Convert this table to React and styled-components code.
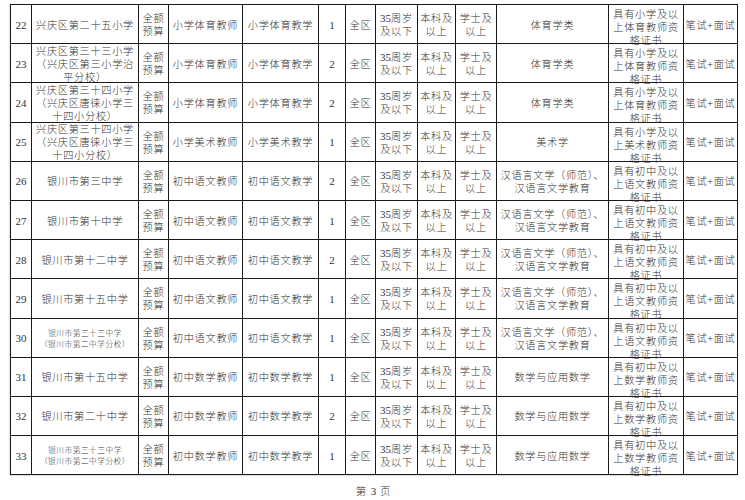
import React from 'react'
import styled, { createGlobalStyle } from 'styled-components'

const GlobalStyle = createGlobalStyle`
  body {
    margin: 0;
    background: #fff;
    font-family: "Liberation Serif", "Noto Sans CJK SC", serif;
    font-weight: 300;
    color: #333;
  }
`

const Page = styled.div`
  width: 745px;
  height: 500px;
  padding: 4px 0 0 10px;
  box-sizing: border-box;
`

const Table = styled.table`
  table-layout: fixed;
  width: 727px;
  border-collapse: collapse;
  border: 1.5px solid #151515;
  box-shadow: 0 1px 1px rgba(0, 0, 0, 0.12), -1px 0 1px rgba(0, 0, 0, 0.08);
`

const Row = styled.tr`
  height: 39.2px;
`

const Cell = styled.td`
  border: 1px solid #1a1a1a;
  padding: 0;
  vertical-align: middle;
  text-align: center;
`

const Inner = styled.div`
  height: 38px;
  display: flex;
  flex-direction: column;
  justify-content: ${p => (p.$top ? 'flex-start' : 'center')};
  padding-top: ${p => (p.$top ? '3px' : '2px')};
  box-sizing: border-box;
  overflow: visible;
  font-size: ${p => (p.$small ? '7.6px' : '10.2px')};
  letter-spacing: ${p => (p.$small ? '0.6px' : '0.7px')};
  line-height: ${p => (p.$small ? '11px' : '13px')};
  white-space: nowrap;
`

const Num = styled.span`
  font-family: "Liberation Serif", serif;
  font-weight: 400;
  font-size: 11px;
  letter-spacing: 0;
`

const Footer = styled.div`
  width: 727px;
  margin-top: 8px;
  text-align: center;
  font-size: 10.5px;
  letter-spacing: 1px;
`

const widths = [21, 107, 30, 74, 76, 27, 30, 42, 38, 41, 112, 75, 54]

const ti = {
  school: '兴庆区第三十四小学',
}

const rows = [
  { n: 22, school: ['兴庆区第二十五小学'], post: '小学体育教师', job: '小学体育教学', count: 1, major: ['体育学类'], cert: ['具有小学及以', '上体育教师资', '格证书'] },
  { n: 23, school: ['兴庆区第三十三小学', '（兴庆区第三小学治', '平分校）'], post: '小学体育教师', job: '小学体育教学', count: 2, major: ['体育学类'], cert: ['具有小学及以', '上体育教师资', '格证书'] },
  { n: 24, school: [ti.school, '（兴庆区唐徕小学三', '十四小分校）'], post: '小学体育教师', job: '小学体育教学', count: 2, major: ['体育学类'], cert: ['具有小学及以', '上体育教师资', '格证书'] },
  { n: 25, school: [ti.school, '（兴庆区唐徕小学三', '十四小分校）'], post: '小学美术教师', job: '小学美术教学', count: 1, major: ['美术学'], cert: ['具有小学及以', '上美术教师资', '格证书'] },
  { n: 26, school: ['银川市第三中学'], post: '初中语文教师', job: '初中语文教学', count: 2, major: ['汉语言文学（师范）、', '汉语言文学教育'], cert: ['具有初中及以', '上语文教师资', '格证书'] },
  { n: 27, school: ['银川市第十中学'], post: '初中语文教师', job: '初中语文教学', count: 1, major: ['汉语言文学（师范）、', '汉语言文学教育'], cert: ['具有初中及以', '上语文教师资', '格证书'] },
  { n: 28, school: ['银川市第十二中学'], post: '初中语文教师', job: '初中语文教学', count: 2, major: ['汉语言文学（师范）、', '汉语言文学教育'], cert: ['具有初中及以', '上语文教师资', '格证书'] },
  { n: 29, school: ['银川市第十五中学'], post: '初中语文教师', job: '初中语文教学', count: 1, major: ['汉语言文学（师范）、', '汉语言文学教育'], cert: ['具有初中及以', '上语文教师资', '格证书'] },
  { n: 30, small: true, school: ['银川市第三十三中学', '（银川市第二中学分校）'], post: '初中语文教师', job: '初中语文教学', count: 1, major: ['汉语言文学（师范）、', '汉语言文学教育'], cert: ['具有初中及以', '上语文教师资', '格证书'] },
  { n: 31, school: ['银川市第十五中学'], post: '初中数学教师', job: '初中数学教学', count: 1, major: ['数学与应用数学'], cert: ['具有初中及以', '上数学教师资', '格证书'] },
  { n: 32, school: ['银川市第二十中学'], post: '初中数学教师', job: '初中数学教学', count: 2, major: ['数学与应用数学'], cert: ['具有初中及以', '上数学教师资', '格证书'] },
  { n: 33, small: true, school: ['银川市第三十三中学', '（银川市第二中学分校）'], post: '初中数学教师', job: '初中数学教学', count: 1, major: ['数学与应用数学'], cert: ['具有初中及以', '上数学教师资', '格证书'] },
]

function Lines({ items }) {
  return items.map((t, i) => <div key={i}>{t}</div>)
}

function App() {
  return (
    <Page>
      <GlobalStyle />
      <Table>
        <colgroup>
          {widths.map((w, i) => <col key={i} style={{ width: w }} />)}
        </colgroup>
        <tbody>
          {rows.map(r => (
            <Row key={r.n}>
              <Cell><Inner><Num>{r.n}</Num></Inner></Cell>
              <Cell><Inner $small={r.small}><Lines items={r.school} /></Inner></Cell>
              <Cell><Inner><div>全额</div><div>预算</div></Inner></Cell>
              <Cell><Inner>{r.post}</Inner></Cell>
              <Cell><Inner>{r.job}</Inner></Cell>
              <Cell><Inner><Num>{r.count}</Num></Inner></Cell>
              <Cell><Inner>全区</Inner></Cell>
              <Cell><Inner><div><Num>35</Num>周岁</div><div>及以下</div></Inner></Cell>
              <Cell><Inner><div>本科及</div><div>以上</div></Inner></Cell>
              <Cell><Inner><div>学士及</div><div>以上</div></Inner></Cell>
              <Cell><Inner><Lines items={r.major} /></Inner></Cell>
              <Cell><Inner $top><Lines items={r.cert} /></Inner></Cell>
              <Cell><Inner>笔试+面试</Inner></Cell>
            </Row>
          ))}
        </tbody>
      </Table>
      <Footer>第 <Num>3</Num> 页</Footer>
    </Page>
  )
}

export default App
